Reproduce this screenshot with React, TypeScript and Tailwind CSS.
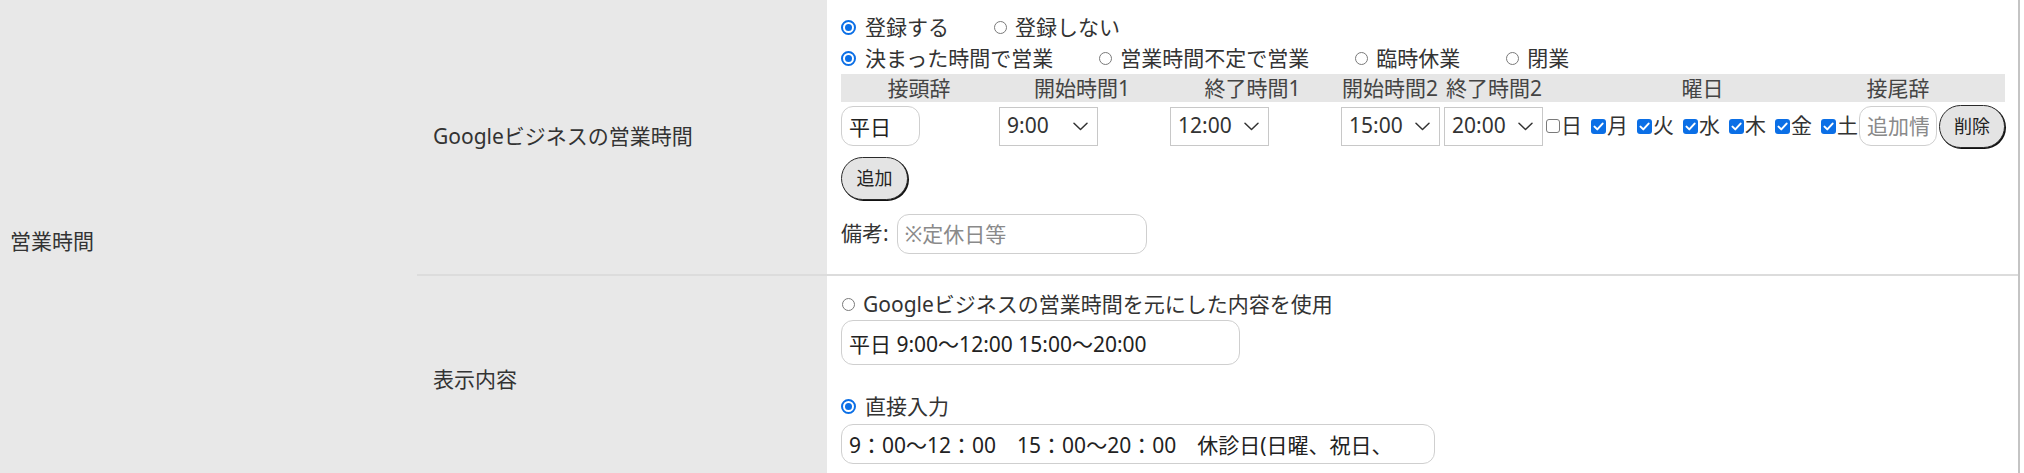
import type { ReactNode } from "react";

const DAYS = [
  { label: "日", checked: false },
  { label: "月", checked: true },
  { label: "火", checked: true },
  { label: "水", checked: true },
  { label: "木", checked: true },
  { label: "金", checked: true },
  { label: "土", checked: true },
];

function Radio({ checked, children }: { checked?: boolean; children: ReactNode }) {
  return (
    <label className="flex items-center">
      {checked ? (
        <span className="flex h-[15px] w-[15px] items-center justify-center rounded-full border-2 border-[#0b6fe6] bg-white">
          <span className="h-[7px] w-[7px] rounded-full bg-[#0b6fe6]" />
        </span>
      ) : (
        <span className="ml-px h-[13px] w-[13px] rounded-full border border-[#7a7a7a] bg-white" />
      )}
      <span className={checked ? "ml-[9px]" : "ml-[8px]"}>{children}</span>
    </label>
  );
}

function Check({ checked, label }: { checked: boolean; label: string }) {
  return (
    <label className="flex items-center">
      {checked ? (
        <span className="flex h-[15px] w-[15px] items-center justify-center rounded-[3px] bg-[#0b6fe6]">
          <svg width="11" height="9" viewBox="0 0 11 9" fill="none">
            <path d="M1.5 4.6l2.8 2.8L9.6 1.6" stroke="white" strokeWidth="2" strokeLinecap="round" strokeLinejoin="round" />
          </svg>
        </span>
      ) : (
        <span className="h-[14px] w-[14px] rounded-[3px] border border-[#7a7a7a] bg-white" />
      )}
      <span className="ml-px">{label}</span>
    </label>
  );
}

function TimeSelect({ value, className }: { value: string; className?: string }) {
  return (
    <div
      className={`flex h-[39px] w-[99px] items-center justify-between border border-[#c8c8c8] bg-white pl-[7px] pr-[9px] ${className ?? ""}`}
    >
      <span>{value}</span>
      <svg width="15" height="9" viewBox="0 0 15 9" fill="none">
        <path d="M1 1.2l6.5 6.3L14 1.2" stroke="#333" strokeWidth="1.5" strokeLinecap="round" strokeLinejoin="round" />
      </svg>
    </div>
  );
}

function PillButton({ children, className }: { children: ReactNode; className?: string }) {
  return (
    <button
      type="button"
      className={`h-[43px] rounded-full border-[1.5px] border-[#2a2a2a] bg-[#e4e4e4] text-[18px] text-[#222] shadow-[1px_1px_0_#111] ${className ?? ""}`}
    >
      {children}
    </button>
  );
}

const COLS = "grid grid-cols-[156px_170px_171px_104px_104px_313px_78px_68px]";

export default function App() {
  return (
    <div className="h-screen overflow-hidden bg-white font-['Noto_Sans','Noto_Sans_CJK_JP',sans-serif] text-[21px] text-[#333]">
      <div className="flex w-[2020px] border-r-2 border-[#c4c4c4] bg-[#e8e8e8]">
        <div className="flex w-[417px] items-center pl-[10px]">営業時間</div>

        <div className="flex flex-1 flex-col">
          {/* Googleビジネスの営業時間 */}
          <div className="flex h-[276px] border-b-2 border-[#dcdcdc]">
            <div className="flex w-[410px] items-center pl-4">Googleビジネスの営業時間</div>
            <div className="flex-1 bg-white pl-[14px] pt-3">
              <div className="flex gap-[44px] leading-[31px]">
                <Radio checked>登録する</Radio>
                <Radio>登録しない</Radio>
              </div>
              <div className="flex gap-[45px] leading-[31px]">
                <Radio checked>決まった時間で営業</Radio>
                <Radio>営業時間不定で営業</Radio>
                <Radio>臨時休業</Radio>
                <Radio>閉業</Radio>
              </div>

              <div className={`${COLS} h-[28px] w-[1164px] items-center bg-[#e6e6e6] text-center leading-[28px] text-[#444]`}>
                <span>接頭辞</span>
                <span>開始時間1</span>
                <span>終了時間1</span>
                <span>開始時間2</span>
                <span>終了時間2</span>
                <span>曜日</span>
                <span>接尾辞</span>
                <span />
              </div>

              <div className={`${COLS} mt-px h-[46px] w-[1164px] items-center`}>
                <input
                  defaultValue="平日"
                  className="h-[40px] w-[79px] rounded-[12px] border border-[#cfcfcf] bg-white px-[7px] text-[#222] outline-none"
                />
                <TimeSelect value="9:00" className="ml-[2px]" />
                <TimeSelect value="12:00" className="ml-[3px]" />
                <TimeSelect value="15:00" className="ml-[3px]" />
                <TimeSelect value="20:00" className="ml-[2px]" />
                <div className="flex gap-[9px]">
                  {DAYS.map((d) => (
                    <Check key={d.label} checked={d.checked} label={d.label} />
                  ))}
                </div>
                <input
                  placeholder="追加情報"
                  className="h-[40px] w-[78px] rounded-[12px] border border-[#cfcfcf] bg-white px-[7px] outline-none placeholder:text-[#8a8a8a]"
                />
                <PillButton className="ml-[2px] w-[66px]">削除</PillButton>
              </div>

              <PillButton className="mt-2 w-[67px]">追加</PillButton>

              <div className="mt-[14px] flex items-center">
                <span>備考:</span>
                <input
                  placeholder="※定休日等"
                  className="ml-[8px] h-[40px] w-[250px] rounded-[12px] border border-[#cfcfcf] bg-white px-[7px] outline-none placeholder:text-[#8a8a8a]"
                />
              </div>
            </div>
          </div>

          {/* 表示内容 */}
          <div className="flex h-[208px]">
            <div className="flex w-[410px] items-center pl-4">表示内容</div>
            <div className="flex-1 bg-white pl-[14px] pt-[13px]">
              <div className="flex leading-[31px]">
                <Radio>Googleビジネスの営業時間を元にした内容を使用</Radio>
              </div>
              <input
                readOnly
                value="平日 9:00〜12:00 15:00〜20:00"
                className="h-[45px] w-[399px] rounded-[12px] border border-[#cfcfcf] bg-white px-[7px] text-[#222] outline-none"
              />
              <div className="mt-[26px] flex leading-[31px]">
                <Radio checked>直接入力</Radio>
              </div>
              <input
                readOnly
                value="9：00〜12：00　15：00〜20：00　休診日(日曜、祝日、"
                className="mt-[2px] h-[40px] w-[594px] rounded-[12px] border border-[#cfcfcf] bg-white px-[7px] text-[#222] outline-none"
              />
            </div>
          </div>
        </div>
      </div>
    </div>
  );
}
